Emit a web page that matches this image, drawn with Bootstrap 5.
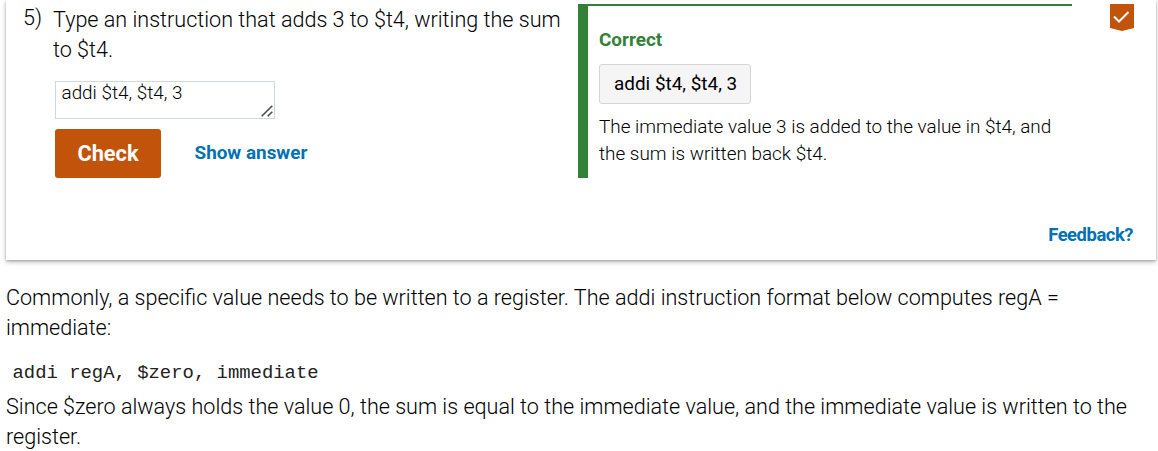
<!DOCTYPE html>
<html lang="en">
<head>
<meta charset="utf-8">
<title>Add immediate</title>
<link rel="stylesheet" href="https://cdn.jsdelivr.net/npm/bootstrap@5.3.0/dist/css/bootstrap.min.css">
<style>
body{font-family:Roboto,"Liberation Sans",sans-serif;font-weight:300;font-size:21.58px;line-height:30px;color:#000;height:451px;overflow:hidden}
.activity{height:260px;margin:0 2px 0 6px;box-shadow:0 2px 5px rgba(0,0,0,.26),0 1px 2px rgba(0,0,0,.2)}
.num{width:47px;padding:3px 0 0 17px}
.question{width:525px;padding-top:5px}
.answer{width:220px;height:38px;margin:16px 0 10px 2px}
.answer textarea{width:220px;height:38px;border:1px solid #cfd8dc;border-radius:0;padding:0 5.5px;font-size:18.9px;font-weight:300;line-height:22px;resize:none;overflow:hidden;color:#000;background:#fff}
.grip{right:2px;bottom:2px}
.btn-check-answer{--bs-btn-color:#fff;--bs-btn-bg:#c1540a;--bs-btn-hover-bg:#a84808;--bs-btn-hover-color:#fff;width:106px;height:49px;margin-left:2px;border:0;border-radius:3px;font-size:21.8px;font-weight:700;padding:2px 0 0}
.action{color:#0071b3;font-size:18.9px;font-weight:700;line-height:24px}
.show-answer{margin:-2px 0 0 33.5px}
.explanation{width:494px;height:174px;margin-top:4px;border-left:10px solid #338136;border-top:2px solid #338136;padding:20px 0 0 11px;font-size:18.92px;line-height:27px}
.verdict{color:#338136;font-weight:700}
.solution{width:152px;height:40px;margin:11px 0 9px;border:1px solid #d5d5d5;border-radius:3px;background:#f5f5f5;font-weight:400;line-height:37px;padding-left:14px}
.ribbon{margin:4px 22px 0 auto}
.feedback{right:23px;bottom:13px;font-size:18.4px;letter-spacing:-.45px}
.prose{padding:23px 0 0 6px}
.code-line{font:18.9px/24px "Liberation Mono",monospace;margin:18px 0 7px 6.5px;overflow:visible;color:#222}
</style>
</head>
<body>
<section class="activity position-relative d-flex align-items-start bg-white text-nowrap">
  <div class="num flex-shrink-0">5)</div>
  <div class="question flex-shrink-0">
    <div class="q-text">Type an instruction that adds 3 to $t4, writing the sum<br>to $t4.</div>
    <div class="answer position-relative">
      <textarea class="d-block" spellcheck="false" aria-label="Answer">addi $t4, $t4, 3</textarea>
      <svg class="grip position-absolute" width="12" height="12" viewBox="0 0 12 12" stroke="#4d4d4d" stroke-width="1.6" aria-hidden="true"><path d="M.7 11.3 11.3.7M6.7 11.3l4.6-4.6"/></svg>
    </div>
    <div class="d-flex align-items-center">
      <button class="btn btn-check-answer" type="button">Check</button>
      <a class="action show-answer text-decoration-none" href="#">Show answer</a>
    </div>
  </div>
  <div class="explanation flex-shrink-0">
    <div class="verdict">Correct</div>
    <div class="solution">addi $t4, $t4, 3</div>
    <div class="reason">The immediate value 3 is added to the value in $t4, and<br>the sum is written back $t4.</div>
  </div>
  <svg class="ribbon" width="24" height="27" viewBox="0 0 24 27" role="img" aria-label="Completed"><path d="M0 0h24v24l-12 3-12-3z" fill="#c1540a"/><path d="m4 12.5 5 5L18.5 8" fill="none" stroke="#fff" stroke-width="2"/></svg>
  <a class="action feedback position-absolute text-decoration-none" href="#">Feedback?</a>
</section>
<main class="prose text-nowrap">
  <p class="mb-0">Commonly, a specific value needs to be written to a register. The addi instruction format below computes regA =<br>immediate:</p>
  <pre class="code-line">addi regA, $zero, immediate</pre>
  <p class="mb-0">Since $zero always holds the value 0, the sum is equal to the immediate value, and the immediate value is written to the<br>register.</p>
</main>
<script src="https://cdn.jsdelivr.net/npm/bootstrap@5.3.0/dist/js/bootstrap.bundle.min.js"></script>
</body>
</html>
